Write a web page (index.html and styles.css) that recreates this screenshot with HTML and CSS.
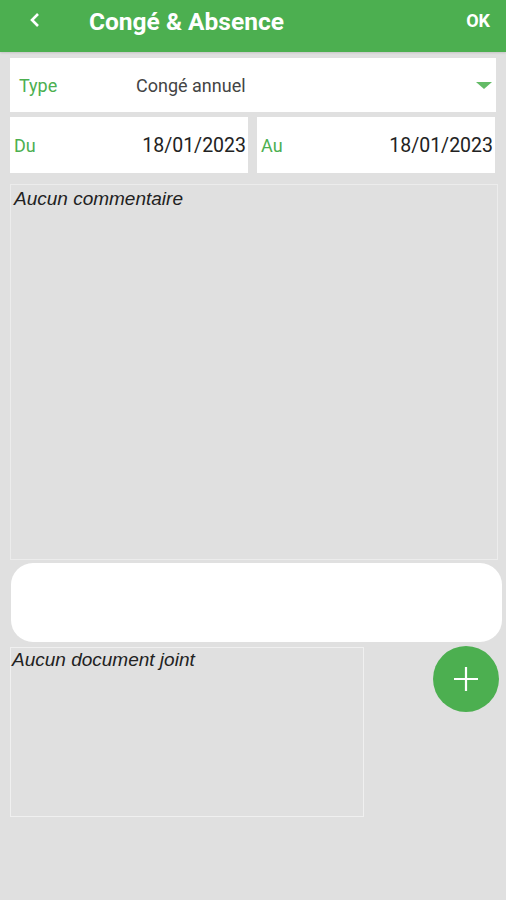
FILE: index.html
```html
<!DOCTYPE html>
<html lang="fr">
<head>
  <meta charset="UTF-8">
  <title>Congé &amp; Absence</title>
  <link rel="stylesheet" href="styles.css">
</head>
<body>

  <header class="topbar">
    <span class="back">
      <svg width="12" height="16" viewBox="0 0 12 16"><path d="M9 2 L3 8 L9 14" fill="none" stroke="#fff" stroke-width="2.6"/></svg>
    </span>
    <h1 class="title">Congé &amp; Absence</h1>
    <span class="ok">OK</span>
  </header>

  <div class="type-row">
    <span class="label">Type</span>
    <span class="type-value">Congé annuel</span>
    <span class="caret"></span>
  </div>

  <div class="date-row">
    <div class="date-box">
      <span class="label">Du</span>
      <span class="date">18/01/2023</span>
    </div>
    <div class="date-box">
      <span class="label">Au</span>
      <span class="date">18/01/2023</span>
    </div>
  </div>

  <div class="comment">Aucun commentaire</div>

  <div class="note"></div>

  <div class="docs-row">
    <div class="docs">Aucun document joint</div>
    <button class="fab">
      <svg width="24" height="24" viewBox="0 0 24 24"><path d="M12 0 V24 M0 12 H24" stroke="#fff" stroke-width="2.2"/></svg>
    </button>
  </div>

</body>
</html>
```

FILE: styles.css
```css
body {
  margin: 0;
  padding: 0;
  background: #e0e0e0;
  font-family: Roboto, 'Noto Sans', sans-serif;
  height: 900px;
}

.topbar {
  height: 52px;
  background: #4caf50;
  display: flex;
  align-items: center;
  color: #fff;
  box-shadow: 0 1px 2px rgba(0, 0, 0, 0.12);
}

.back {
  width: 12px;
  margin-left: 29px;
  margin-top: -12px;
  display: flex;
}

.title {
  margin: -10px 0 0 48px;
  font-size: 24.5px;
  font-weight: 700;
  flex: 1;
}

.ok {
  font-size: 18px;
  font-weight: 700;
  margin-right: 16px;
  margin-top: -12px;
}

.label {
  color: #4caf50;
  font-size: 18px;
}

.type-row {
  margin: 6px 10px 0 10px;
  height: 54px;
  background: #fff;
  display: flex;
  align-items: center;
  padding: 0 4px 0 9px;
}

.type-row .label {
  width: 117px;
}

.type-value {
  flex: 1;
  font-size: 18px;
  color: #444;
}

.caret {
  width: 0;
  height: 0;
  border-left: 8.5px solid transparent;
  border-right: 8.5px solid transparent;
  border-top: 7px solid #63bb66;
  margin-top: 1px;
}

.date-row {
  margin: 5px 11px 0 10px;
  display: flex;
  gap: 9px;
}

.date-box {
  flex: 1;
  height: 56px;
  background: #fff;
  display: flex;
  align-items: center;
  justify-content: space-between;
  padding: 0 2px 0 4px;
}

.date {
  font-size: 19.5px;
  color: #222;
}

.comment {
  margin: 11px 8px 0 10px;
  border: 1px solid #ececec;
  padding: 3px 3px;
  box-sizing: border-box;
  height: 376px;
  font-family: 'Liberation Sans', Arial, sans-serif;
  font-style: italic;
  font-size: 19px;
  color: #222;
}

.note {
  margin: 3px 4px 0 11px;
  height: 79px;
  background: #fff;
  border-radius: 22px;
}

.docs-row {
  margin: 5px 7px 0 10px;
  display: flex;
  justify-content: space-between;
  align-items: flex-start;
}

.docs {
  width: 354px;
  height: 170px;
  box-sizing: border-box;
  border: 1px solid #f0f0f0;
  padding: 1px 1px;
  font-family: 'Liberation Sans', Arial, sans-serif;
  font-style: italic;
  font-size: 19px;
  color: #222;
}

.fab {
  width: 66px;
  height: 66px;
  border-radius: 50%;
  border: none;
  background: #4caf50;
  display: flex;
  align-items: center;
  justify-content: center;
  padding: 0;
  margin-top: -1px;
}
```
